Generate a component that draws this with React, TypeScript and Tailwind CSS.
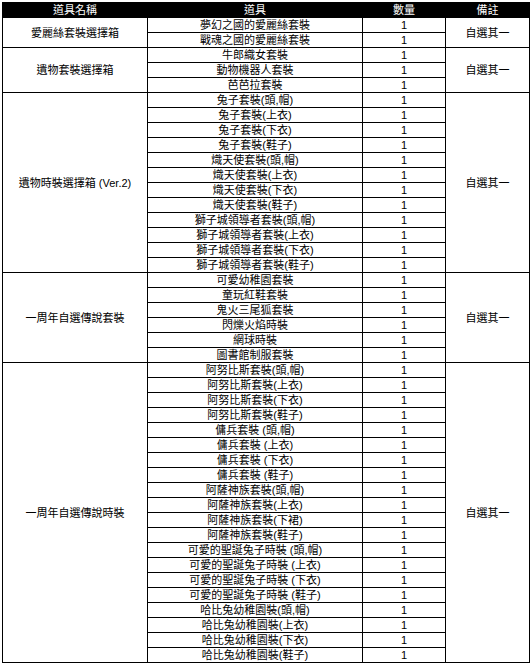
const groups = [
  {
    name: '愛麗絲套裝選擇箱',
    items: ['夢幻之國的愛麗絲套裝', '戰魂之國的愛麗絲套裝'],
  },
  {
    name: '遺物套裝選擇箱',
    items: ['牛郎織女套裝', '動物機器人套裝', '芭芭拉套裝'],
  },
  {
    name: '遺物時裝選擇箱 (Ver.2)',
    items: [
      '兔子套裝(頭,帽)',
      '兔子套裝(上衣)',
      '兔子套裝(下衣)',
      '兔子套裝(鞋子)',
      '熾天使套裝(頭,帽)',
      '熾天使套裝(上衣)',
      '熾天使套裝(下衣)',
      '熾天使套裝(鞋子)',
      '獅子城領導者套裝(頭,帽)',
      '獅子城領導者套裝(上衣)',
      '獅子城領導者套裝(下衣)',
      '獅子城領導者套裝(鞋子)',
    ],
  },
  {
    name: '一周年自選傳說套裝',
    items: ['可愛幼稚園套裝', '童玩紅鞋套裝', '鬼火三尾狐套裝', '閃爍火焰時裝', '網球時裝', '圖書館制服套裝'],
  },
  {
    name: '一周年自選傳說時裝',
    items: [
      '阿努比斯套裝(頭,帽)',
      '阿努比斯套裝(上衣)',
      '阿努比斯套裝(下衣)',
      '阿努比斯套裝(鞋子)',
      '傭兵套裝 (頭,帽)',
      '傭兵套裝 (上衣)',
      '傭兵套裝 (下衣)',
      '傭兵套裝 (鞋子)',
      '阿薩神族套裝(頭,帽)',
      '阿薩神族套裝(上衣)',
      '阿薩神族套裝(下裙)',
      '阿薩神族套裝(鞋子)',
      '可愛的聖誕兔子時裝 (頭,帽)',
      '可愛的聖誕兔子時裝 (上衣)',
      '可愛的聖誕兔子時裝 (下衣)',
      '可愛的聖誕兔子時裝 (鞋子)',
      '哈比兔幼稚園裝(頭,帽)',
      '哈比兔幼稚園裝(上衣)',
      '哈比兔幼稚園裝(下衣)',
      '哈比兔幼稚園裝(鞋子)',
    ],
  },
];

const cell = 'border border-black p-0 h-[14px] leading-[14px] text-center whitespace-nowrap';

export default function App() {
  return (
    <div className="min-h-[665px] w-[531px] bg-white pt-[2px] pl-[2px] font-['Liberation_Sans','Noto_Sans_CJK_TC',sans-serif] text-[11px] text-black">
      <table className="border-collapse table-fixed">
        <colgroup>
          <col className="w-[145px]" />
          <col className="w-[215px]" />
          <col className="w-[83px]" />
          <col className="w-[84px]" />
        </colgroup>
        <thead>
          <tr className="bg-black text-white">
            <th className={cell + ' font-normal'}>道具名稱</th>
            <th className={cell + ' font-normal'}>道具</th>
            <th className={cell + ' font-normal'}>數量</th>
            <th className={cell + ' font-normal'}>備註</th>
          </tr>
        </thead>
        <tbody>
          {groups.map((group) =>
            group.items.map((item, i) => (
              <tr key={group.name + item}>
                {i === 0 && (
                  <td rowSpan={group.items.length} className={cell}>
                    {group.name}
                  </td>
                )}
                <td className={cell}>{item}</td>
                <td className={cell}>1</td>
                {i === 0 && (
                  <td rowSpan={group.items.length} className={cell}>
                    自選其一
                  </td>
                )}
              </tr>
            ))
          )}
        </tbody>
      </table>
    </div>
  );
}
